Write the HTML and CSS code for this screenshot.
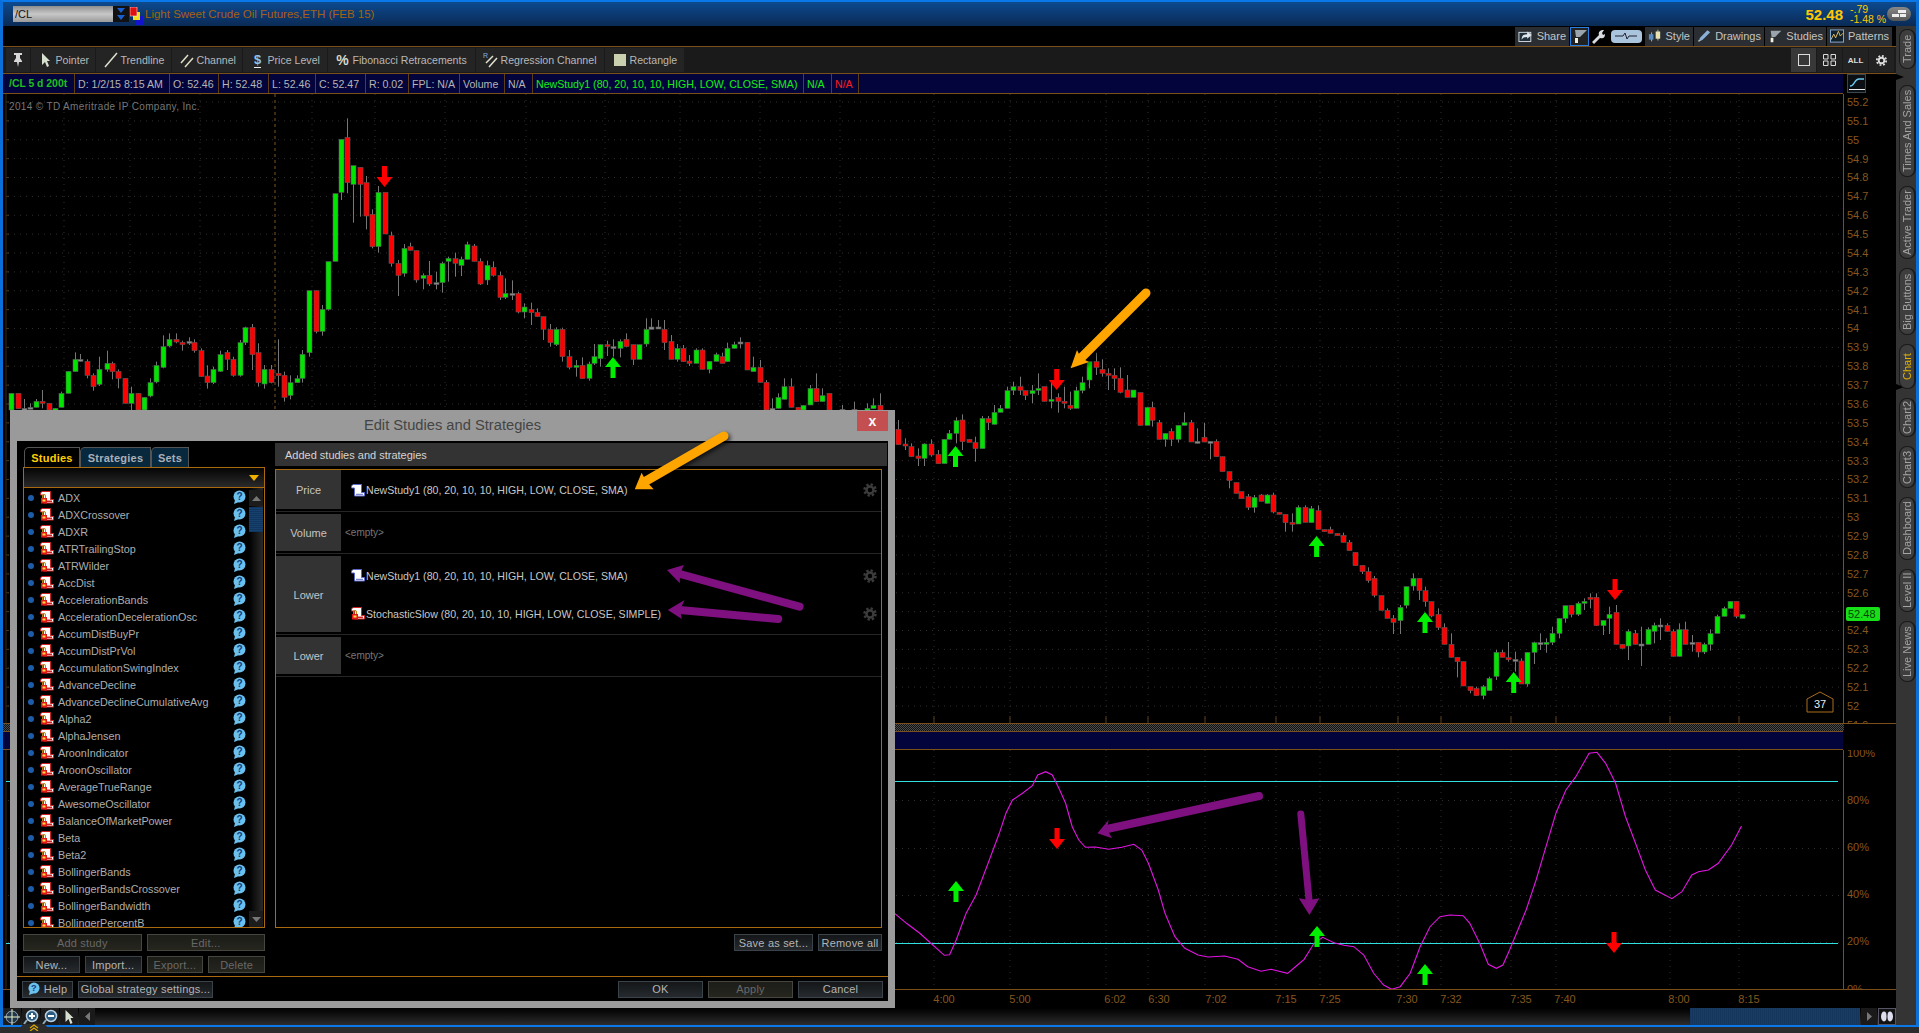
FILE: index.html
```html
<!DOCTYPE html>
<html lang="en">
    <head>
        <meta charset="UTF-8" />
        <title>Edit Studies and Strategies</title>
        <meta name="viewport" content="width=device-width, initial-scale=1.0" />
        <link rel="stylesheet" href="styles.css">
    </head>
    <body>
        <svg class="symbols" aria-hidden="true">
            <symbol id="scroll-blue" viewBox="0 0 15 13">
                <path d="M3 .5h8.500v8h3v3.500h-10v-8h-3v-2z" fill="#fff" stroke="#5a68c8" />
                <path d="M6 10.300h7" stroke="#5a68c8" />
            </symbol>
            <symbol id="scroll-red" viewBox="0 0 15 13">
                <path d="M3 .5h8.500v8h3v3.500h-10v-8h-3v-2z" fill="#fff" stroke="#cc2222" />
                <path d="M8 10.300h5" stroke="#cc2222" stroke-width="1.500" />
                <path d="M3.500 7v-2a1.500 1.500 0 0 1 3 0v2" fill="none" stroke="#b8860b" />
                <rect x="2" y="7" width="6" height="5.500" fill="#e01818" />
                <rect x="3.500" y="8.500" width="3" height="2" fill="#ffe040" />
            </symbol>
            <symbol id="help-bubble" viewBox="0 0 13 15">
                <circle cx="6.500" cy="6.500" r="6" fill="#6cc0ee" />
                <path d="M2 10l-1 4 5-2z" fill="#6cc0ee" />
                <text x="6.500" y="10" text-anchor="middle" font-size="10" font-weight="700" font-family="Liberation Sans, sans-serif" fill="#0d3f80">?</text>
            </symbol>
            <symbol id="gear" viewBox="0 0 14 14">
                <circle cx="7" cy="7" r="5.500" fill="none" stroke="#3c3c3c" stroke-width="2.500" stroke-dasharray="2.300 2" />
                <circle cx="7" cy="7" r="3.500" fill="none" stroke="#3c3c3c" stroke-width="2.500" />
            </symbol>
            <symbol id="fan" viewBox="0 0 16 16">
                <path d="M3 2h12l-7 7H4z" fill="#9aa4ac" />
                <path d="M3 10h3v5H3z" fill="#f0f0e0" />
            </symbol>
            <symbol id="arrow-pointer" viewBox="0 0 10 16">
                <path d="M1 1l8 8H6l2 5-2 1-2-5-3 3z" fill="#d8e0d0" />
            </symbol>
        </svg>

        <header class="topbar">
            <div class="symbol-box">
                <input class="symbol-input" type="text" value="/CL" />
                <span class="symbol-drop">
                    <svg width="8" height="14" viewBox="0 0 8 14"><path d="M0 1h8L4 6zM0 8h8l-4 5z" fill="#1a5fd0" /></svg>
                </span>
            </div>
            <svg class="link-icon" width="13" height="18" viewBox="0 0 13 18">
                <rect x="5" y="9" width="8" height="9" fill="#1414d0" />
                <rect x="3" y="5" width="7" height="8" fill="#f0e020" />
                <rect x="0" y="0" width="7" height="9" fill="#e01010" stroke="#fff" stroke-width=".5" />
            </svg>
            <span class="symbol-name">Light Sweet Crude Oil Futures,ETH (FEB 15)</span>
            <span class="last-price">52.48</span>
            <span class="change">
                <span>-.79</span>
                <span>-1.48 %</span>
            </span>
            <span class="layout-pill">
                <svg width="16" height="8" viewBox="0 0 16 8"><path d="M7 0h8v3H7zM1 4h7v3H1zM9 4h6v3H9z" fill="#eee" /></svg>
            </span>
        </header>

        <div class="main">
            <div class="workspace">
                <div class="subbar">
                    <button class="sub-btn">
                        <svg width="16" height="14" viewBox="0 0 16 14"><rect x="1" y="3" width="13" height="10" fill="#22303c" stroke="#d8e0e8" /><path d="M4 11c0-5 3-6 6-6V2l5 4-5 4V8c-3 0-5 1-6 3z" fill="#dfe6ee" /></svg>
                        Share
                    </button>
                    <button class="sub-icon sub-icon-active"><svg width="16" height="16"><use href="#fan" /></svg></button>
                    <button class="sub-icon sub-icon-dark">
                        <svg width="15" height="15" viewBox="0 0 15 15"><path d="M1 13l7-7c-1-3 1-5 5-5l-2 3 1 2 2-1c0 4-2 5-5 4l-6 6z" fill="#d8dce0" /></svg>
                    </button>
                    <button class="sub-icon sub-icon-pulse">
                        <span class="pulse-pill">
                            <svg width="22" height="8" viewBox="0 0 22 8"><path d="M0 4h8l2-3 2 6 2-3h8" fill="none" stroke="#223" /></svg>
                        </span>
                    </button>
                    <button class="sub-btn">
                        <svg width="15" height="14" viewBox="0 0 15 14"><path d="M4 3v10M11 0v12" stroke="#bbb" /><rect x="1" y="5" width="5" height="6" fill="#5a8ac0" /><rect x="8.500" y="2" width="5" height="8" fill="#e8e0b0" /></svg>
                        Style
                    </button>
                    <button class="sub-btn">
                        <svg width="15" height="14" viewBox="0 0 15 14"><path d="M3 9l8-8 3 2-8 8-4 2z" fill="#8ab0d8" /><path d="M2 11l-1 2 2-1z" fill="#eec" /></svg>
                        Drawings
                    </button>
                    <button class="sub-btn">
                        <svg width="16" height="16"><use href="#fan" /></svg>
                        Studies
                    </button>
                    <button class="sub-btn">
                        <svg width="15" height="14" viewBox="0 0 15 14"><rect x=".5" y=".5" width="14" height="13" fill="#12202c" stroke="#8ab0d8" /><path d="M1 11l3-6 2 4 3-7 2 5 3-3" fill="none" stroke="#e8c060" /></svg>
                        Patterns
                    </button>
                </div>

                <div class="toolbar">
                    <div class="tool-group">
                        <button class="tool-btn tool-pin">
                            <svg width="8" height="14" viewBox="0 0 8 14"><path d="M0 0h8v2H6v3l2 3v1H5l-1 5-1-5H0V8l2-3V2H0z" fill="#d8d8d8" /></svg>
                        </button>
                        <button class="tool-btn"><span class="tool-ico"><svg width="10" height="16"><use href="#arrow-pointer" /></svg></span>Pointer</button>
                        <button class="tool-btn"><span class="tool-ico"><svg width="14" height="16" viewBox="0 0 14 16"><path d="M1 15L13 1" stroke="#e0e0d0" stroke-width="1.500" /></svg></span>Trendline</button>
                        <button class="tool-btn"><span class="tool-ico"><svg width="14" height="16" viewBox="0 0 14 16"><path d="M1 11L8 3M5 15l8-9" stroke="#e0e0c8" stroke-width="1.500" /></svg></span>Channel</button>
                        <button class="tool-btn"><span class="tool-ico"><span class="tool-dollar">$</span></span>Price Level</button>
                        <button class="tool-btn"><span class="tool-ico"><span class="tool-percent">%</span></span>Fibonacci Retracements</button>
                        <button class="tool-btn"><span class="tool-ico"><svg width="15" height="16" viewBox="0 0 15 16"><path d="M3 11l7-7M6 15l8-9" stroke="#e0e0d0" stroke-width="1.500" /><text x="0" y="6" font-size="7" font-family="Liberation Sans, sans-serif" fill="#7ab0e8">R</text></svg></span>Regression Channel</button>
                        <button class="tool-btn"><span class="tool-ico"><span class="tool-rect"></span></span>Rectangle</button>
                    </div>
                    <div class="tool-right">
                        <button class="view-btn view-btn-on"><svg width="12" height="12" viewBox="0 0 12 12"><rect x=".5" y=".5" width="11" height="11" fill="none" stroke="#ddd" /></svg></button>
                        <button class="view-btn"><svg width="13" height="12" viewBox="0 0 13 12"><path d="M.5.5h4.500v4.500H.5zM8 .5h4.500v4.500H8zM.5 7h4.500v4.500H.5zM8 7h4.500v4.500H8z" fill="none" stroke="#ddd" /></svg></button>
                        <button class="view-btn view-all">ALL</button>
                        <button class="view-btn"><svg width="13" height="13" viewBox="0 0 14 14"><circle cx="7" cy="7" r="5" fill="none" stroke="#ddd" stroke-width="2" stroke-dasharray="2 1.900" /><circle cx="7" cy="7" r="3" fill="none" stroke="#ddd" stroke-width="2" /></svg></button>
                    </div>
                </div>

                <div class="info-row">
                    <div class="infobar">
                        <span class="info-cell info-symbol">/CL 5 d 200t</span>
                        <span class="info-cell">D: 1/2/15 8:15 AM</span>
                        <span class="info-cell">O: 52.46</span>
                        <span class="info-cell">H: 52.48</span>
                        <span class="info-cell">L: 52.46</span>
                        <span class="info-cell">C: 52.47</span>
                        <span class="info-cell">R: 0.02</span>
                        <span class="info-cell">FPL: N/A</span>
                        <span class="info-cell">Volume</span>
                        <span class="info-cell">N/A</span>
                        <span class="info-cell info-study">NewStudy1 (80, 20, 10, 10, HIGH, LOW, CLOSE, SMA)</span>
                        <span class="info-cell info-study">N/A</span>
                        <span class="info-cell info-red">N/A</span>
                    </div>
                    <span class="curve-btn">
                        <svg width="16" height="14" viewBox="0 0 16 14"><path d="M1 9c5 0 4-7 9-7h5" fill="none" stroke="#6cc8f0" stroke-width="1.500" /><path d="M0 12.500h16" stroke="#eee" /></svg>
                    </span>
                </div>

                <div class="price-panel">
                    <div class="chart-wrap">
                        <svg class="price-chart" id="price-chart" viewBox="3 94 1840 629"></svg>
                        <span class="copyright">2014 © TD Ameritrade IP Company, Inc.</span>
                    </div>
                    <div class="price-axis">
                        <span>55.2</span><span>55.1</span><span>55</span><span>54.9</span><span>54.8</span><span>54.7</span>
                        <span>54.6</span><span>54.5</span><span>54.4</span><span>54.3</span><span>54.2</span><span>54.1</span>
                        <span>54</span><span>53.9</span><span>53.8</span><span>53.7</span><span>53.6</span><span>53.5</span>
                        <span>53.4</span><span>53.3</span><span>53.2</span><span>53.1</span><span>53</span><span>52.9</span>
                        <span>52.8</span><span>52.7</span><span>52.6</span>
                        <span class="tag-row"><b class="price-tag">52.48</b></span>
                        <span>52.4</span><span>52.3</span><span>52.2</span><span>52.1</span><span>52</span><span>51.9</span>
                    </div>
                </div>

                <div class="hatch"></div>
                <div class="study-bar"></div>

                <div class="lower-panel">
                    <svg class="lower-chart" id="lower-chart" viewBox="3 750 1840 239"></svg>
                    <div class="percent-axis">
                        <span>100%</span><span>80%</span><span>60%</span><span>40%</span><span>20%</span><span>0%</span>
                    </div>
                </div>

                <div class="time-axis">
                    <span style="left: 941px">4:00</span>
                    <span style="left: 1017px">5:00</span>
                    <span style="left: 1112px">6:02</span>
                    <span style="left: 1156px">6:30</span>
                    <span style="left: 1213px">7:02</span>
                    <span style="left: 1283px">7:15</span>
                    <span style="left: 1327px">7:25</span>
                    <span style="left: 1404px">7:30</span>
                    <span style="left: 1448px">7:32</span>
                    <span style="left: 1518px">7:35</span>
                    <span style="left: 1562px">7:40</span>
                    <span style="left: 1676px">8:00</span>
                    <span style="left: 1746px">8:15</span>
                </div>

                <div class="scroll-row">
                    <span class="scroll-tool"><svg width="16" height="16" viewBox="0 0 16 16"><circle cx="8" cy="8" r="6" fill="#22384a" stroke="#8fa8b8" /><path d="M8 0v16M0 8h16" stroke="#e8f0c8" /></svg></span>
                    <span class="scroll-tool"><svg width="16" height="16" viewBox="0 0 16 16"><path d="M4 11l-3 4" stroke="#8fa8b8" stroke-width="2" /><circle cx="9" cy="7" r="5.500" fill="#2a5a80" stroke="#b8d0e0" stroke-width="1.500" /><path d="M9 4v6M6 7h6" stroke="#fff" stroke-width="2" /></svg></span>
                    <span class="scroll-tool"><svg width="16" height="16" viewBox="0 0 16 16"><path d="M4 11l-3 4" stroke="#8fa8b8" stroke-width="2" /><circle cx="9" cy="7" r="5.500" fill="#2a5a80" stroke="#b8d0e0" stroke-width="1.500" /><path d="M6 7h6" stroke="#fff" stroke-width="2" /></svg></span>
                    <span class="scroll-tool"><svg width="11" height="16"><use href="#arrow-pointer" /></svg></span>
                    <span class="scroll-arrow"><svg width="5" height="9" viewBox="0 0 5 9"><path d="M5 0v9L0 4.500z" fill="#777" /></svg></span>
                    <span class="scroll-track"></span>
                    <span class="scroll-thumb"></span>
                    <span class="scroll-arrow"><svg width="5" height="9" viewBox="0 0 5 9"><path d="M0 0v9l5-4.500z" fill="#777" /></svg></span>
                    <span class="scroll-end"><svg width="14" height="11" viewBox="0 0 14 11"><ellipse cx="4" cy="5.500" rx="3" ry="5" fill="#dde" /><ellipse cx="10" cy="5.500" rx="3" ry="5" fill="#dde" /><path d="M7 0v11" stroke="#222" /></svg></span>
                </div>
            </div>

            <nav class="sidetabs">
                <span class="notch notch-trade"></span>
                <span class="notch notch-chart"></span>
                <a class="side-tab tab-trade">Trade</a>
                <a class="side-tab tab-times">Times And Sales</a>
                <a class="side-tab tab-active">Active Trader</a>
                <a class="side-tab tab-big">Big Buttons</a>
                <a class="side-tab tab-chart">Chart</a>
                <a class="side-tab tab-chart2">Chart2</a>
                <a class="side-tab tab-chart3">Chart3</a>
                <a class="side-tab tab-dash">Dashboard</a>
                <a class="side-tab tab-level">Level II</a>
                <a class="side-tab tab-news">Live News</a>
            </nav>
        </div>

        <footer class="footer">
            <span class="footer-tab">
                <svg width="10" height="7" viewBox="0 0 10 7"><path d="M1 4l4-3 4 3M1 7l4-3 4 3" fill="none" stroke="#d8a800" stroke-width="1.300" /></svg>
            </span>
        </footer>

        <section class="dialog">
            <h1 class="dialog-title">Edit Studies and Strategies</h1>
            <button class="dialog-close">x</button>
            <div class="dialog-inner">
                <div class="dialog-body">
                    <div class="left-pane">
                        <div class="tabs">
                            <span class="tab tab-on">Studies</span>
                            <span class="tab tab-strategies">Strategies</span>
                            <span class="tab tab-sets">Sets</span>
                        </div>
                        <div class="filter-box">
                            <svg width="10" height="6" viewBox="0 0 10 6"><path d="M0 0h10L5 6z" fill="#f0b000" /></svg>
                        </div>
                        <div class="list-box">
                            <ul class="study-list">
                                <li class="study"><i class="dot"></i><svg class="study-icon"><use href="#scroll-red" /></svg><span class="study-name">ADX</span><svg class="help"><use href="#help-bubble" /></svg></li>
                                <li class="study"><i class="dot"></i><svg class="study-icon"><use href="#scroll-red" /></svg><span class="study-name">ADXCrossover</span><svg class="help"><use href="#help-bubble" /></svg></li>
                                <li class="study"><i class="dot"></i><svg class="study-icon"><use href="#scroll-red" /></svg><span class="study-name">ADXR</span><svg class="help"><use href="#help-bubble" /></svg></li>
                                <li class="study"><i class="dot"></i><svg class="study-icon"><use href="#scroll-red" /></svg><span class="study-name">ATRTrailingStop</span><svg class="help"><use href="#help-bubble" /></svg></li>
                                <li class="study"><i class="dot"></i><svg class="study-icon"><use href="#scroll-red" /></svg><span class="study-name">ATRWilder</span><svg class="help"><use href="#help-bubble" /></svg></li>
                                <li class="study"><i class="dot"></i><svg class="study-icon"><use href="#scroll-red" /></svg><span class="study-name">AccDist</span><svg class="help"><use href="#help-bubble" /></svg></li>
                                <li class="study"><i class="dot"></i><svg class="study-icon"><use href="#scroll-red" /></svg><span class="study-name">AccelerationBands</span><svg class="help"><use href="#help-bubble" /></svg></li>
                                <li class="study"><i class="dot"></i><svg class="study-icon"><use href="#scroll-red" /></svg><span class="study-name">AccelerationDecelerationOsc</span><svg class="help"><use href="#help-bubble" /></svg></li>
                                <li class="study"><i class="dot"></i><svg class="study-icon"><use href="#scroll-red" /></svg><span class="study-name">AccumDistBuyPr</span><svg class="help"><use href="#help-bubble" /></svg></li>
                                <li class="study"><i class="dot"></i><svg class="study-icon"><use href="#scroll-red" /></svg><span class="study-name">AccumDistPrVol</span><svg class="help"><use href="#help-bubble" /></svg></li>
                                <li class="study"><i class="dot"></i><svg class="study-icon"><use href="#scroll-red" /></svg><span class="study-name">AccumulationSwingIndex</span><svg class="help"><use href="#help-bubble" /></svg></li>
                                <li class="study"><i class="dot"></i><svg class="study-icon"><use href="#scroll-red" /></svg><span class="study-name">AdvanceDecline</span><svg class="help"><use href="#help-bubble" /></svg></li>
                                <li class="study"><i class="dot"></i><svg class="study-icon"><use href="#scroll-red" /></svg><span class="study-name">AdvanceDeclineCumulativeAvg</span><svg class="help"><use href="#help-bubble" /></svg></li>
                                <li class="study"><i class="dot"></i><svg class="study-icon"><use href="#scroll-red" /></svg><span class="study-name">Alpha2</span><svg class="help"><use href="#help-bubble" /></svg></li>
                                <li class="study"><i class="dot"></i><svg class="study-icon"><use href="#scroll-red" /></svg><span class="study-name">AlphaJensen</span><svg class="help"><use href="#help-bubble" /></svg></li>
                                <li class="study"><i class="dot"></i><svg class="study-icon"><use href="#scroll-red" /></svg><span class="study-name">AroonIndicator</span><svg class="help"><use href="#help-bubble" /></svg></li>
                                <li class="study"><i class="dot"></i><svg class="study-icon"><use href="#scroll-red" /></svg><span class="study-name">AroonOscillator</span><svg class="help"><use href="#help-bubble" /></svg></li>
                                <li class="study"><i class="dot"></i><svg class="study-icon"><use href="#scroll-red" /></svg><span class="study-name">AverageTrueRange</span><svg class="help"><use href="#help-bubble" /></svg></li>
                                <li class="study"><i class="dot"></i><svg class="study-icon"><use href="#scroll-red" /></svg><span class="study-name">AwesomeOscillator</span><svg class="help"><use href="#help-bubble" /></svg></li>
                                <li class="study"><i class="dot"></i><svg class="study-icon"><use href="#scroll-red" /></svg><span class="study-name">BalanceOfMarketPower</span><svg class="help"><use href="#help-bubble" /></svg></li>
                                <li class="study"><i class="dot"></i><svg class="study-icon"><use href="#scroll-red" /></svg><span class="study-name">Beta</span><svg class="help"><use href="#help-bubble" /></svg></li>
                                <li class="study"><i class="dot"></i><svg class="study-icon"><use href="#scroll-red" /></svg><span class="study-name">Beta2</span><svg class="help"><use href="#help-bubble" /></svg></li>
                                <li class="study"><i class="dot"></i><svg class="study-icon"><use href="#scroll-red" /></svg><span class="study-name">BollingerBands</span><svg class="help"><use href="#help-bubble" /></svg></li>
                                <li class="study"><i class="dot"></i><svg class="study-icon"><use href="#scroll-red" /></svg><span class="study-name">BollingerBandsCrossover</span><svg class="help"><use href="#help-bubble" /></svg></li>
                                <li class="study"><i class="dot"></i><svg class="study-icon"><use href="#scroll-red" /></svg><span class="study-name">BollingerBandwidth</span><svg class="help"><use href="#help-bubble" /></svg></li>
                                <li class="study"><i class="dot"></i><svg class="study-icon"><use href="#scroll-red" /></svg><span class="study-name">BollingerPercentB</span><svg class="help"><use href="#help-bubble" /></svg></li>
                            </ul>
                            <div class="list-scroll">
                                <span class="list-arrow"><svg width="9" height="5" viewBox="0 0 9 5"><path d="M0 5h9L4.500 0z" fill="#777" /></svg></span>
                                <span class="list-thumb"></span>
                                <span class="list-fill"></span>
                                <span class="list-arrow"><svg width="9" height="5" viewBox="0 0 9 5"><path d="M0 0h9L4.500 5z" fill="#777" /></svg></span>
                            </div>
                        </div>
                        <div class="btn-row">
                            <button class="btn btn-off">Add study</button>
                            <button class="btn btn-off">Edit...</button>
                        </div>
                        <div class="btn-row">
                            <button class="btn">New...</button>
                            <button class="btn">Import...</button>
                            <button class="btn btn-off">Export...</button>
                            <button class="btn btn-off">Delete</button>
                        </div>
                    </div>

                    <div class="right-pane">
                        <div class="added-head">Added studies and strategies</div>
                        <div class="slots">
                            <div class="slot">
                                <div class="slot-label slot-tall">Price</div>
                                <div class="slot-items">
                                    <div class="item"><svg class="item-icon"><use href="#scroll-blue" /></svg><span class="item-name">NewStudy1 (80, 20, 10, 10, HIGH, LOW, CLOSE, SMA)</span><svg class="item-gear"><use href="#gear" /></svg></div>
                                </div>
                            </div>
                            <div class="slot">
                                <div class="slot-label">Volume</div>
                                <div class="slot-items"><span class="empty">&lt;empty&gt;</span></div>
                            </div>
                            <div class="slot">
                                <div class="slot-label slot-double">Lower</div>
                                <div class="slot-items">
                                    <div class="item"><svg class="item-icon"><use href="#scroll-blue" /></svg><span class="item-name">NewStudy1 (80, 20, 10, 10, HIGH, LOW, CLOSE, SMA)</span><svg class="item-gear"><use href="#gear" /></svg></div>
                                    <div class="item"><svg class="item-icon"><use href="#scroll-red" /></svg><span class="item-name">StochasticSlow (80, 20, 10, 10, HIGH, LOW, CLOSE, SIMPLE)</span><svg class="item-gear"><use href="#gear" /></svg></div>
                                </div>
                            </div>
                            <div class="slot">
                                <div class="slot-label">Lower</div>
                                <div class="slot-items"><span class="empty">&lt;empty&gt;</span></div>
                            </div>
                        </div>
                        <div class="set-row">
                            <button class="btn btn-save">Save as set...</button>
                            <button class="btn btn-remove">Remove all</button>
                        </div>
                    </div>
                </div>
                <div class="dialog-foot">
                    <button class="btn btn-help"><svg width="12" height="14"><use href="#help-bubble" /></svg>Help</button>
                    <button class="btn btn-global">Global strategy settings...</button>
                    <span class="foot-gap"></span>
                    <button class="btn btn-foot">OK</button>
                    <button class="btn btn-foot btn-off">Apply</button>
                    <button class="btn btn-foot">Cancel</button>
                </div>
            </div>
        </section>

        <svg class="annotations" id="annotations" viewBox="0 0 1919 1033"></svg>

        <script src="app.js"></script>
    </body>
</html>
```
FILE: styles.css
```css
* {
    margin: 0;
    padding: 0;
    box-sizing: border-box;
}

body {
    position: relative;
    width: 1919px;
    height: 1033px;
    overflow: hidden;
    display: flex;
    flex-direction: column;
    background: #000;
    color: #bbb;
    font-family: "Liberation Sans", Arial, sans-serif;
    font-size: 11px;
}

button {
    font-family: inherit;
    font-size: 11px;
    color: inherit;
    border: none;
    background: none;
}

.symbols {
    position: absolute;
    width: 0;
    height: 0;
}

/* top bar */

.topbar {
    flex: none;
    height: 26px;
    display: flex;
    align-items: center;
    border-top: 2px solid #0a78e8;
    border-left: 3px solid #0a6fd8;
    border-right: 3px solid #0a6fd8;
    padding-left: 10px;
    background: linear-gradient(#0c4a8f, #0a2a55);
}

.symbol-box {
    display: flex;
    height: 16px;
    width: 116px;
    background: #111;
}

.symbol-input {
    width: 100px;
    height: 16px;
    border: none;
    padding-left: 2px;
    font-family: inherit;
    font-size: 11px;
    color: #111;
    background: linear-gradient(#8d8d8d, #c8c8c8 50%, #9a9a9a);
}

.symbol-drop {
    flex: 1;
    display: flex;
    align-items: center;
    justify-content: center;
}

.link-icon {
    margin: 3px 2px 0 1px;
}

.symbol-name {
    color: #a8610f;
    font-size: 11.5px;
}

.last-price {
    margin-left: auto;
    color: #ffc800;
    font-size: 15px;
    font-weight: 700;
}

.change {
    display: flex;
    flex-direction: column;
    margin-left: 7px;
    color: #ffc800;
    font-size: 10.5px;
    line-height: 10px;
    width: 37px;
}

.layout-pill {
    display: flex;
    align-items: center;
    justify-content: center;
    width: 24px;
    height: 14px;
    margin-right: 5px;
    border-radius: 7px;
    background: linear-gradient(#888, #555);
}

/* main frame */

.main {
    flex: none;
    height: 999px;
    display: flex;
    border-left: 3px solid #0a6fd8;
    border-right: 3px solid #0a6fd8;
}

.workspace {
    width: 1893px;
    display: flex;
    flex-direction: column;
}

.subbar {
    height: 20px;
    display: grid;
    grid-template-columns: 54px 19px 17px 36px 48px 70px 61px 65px;
    justify-content: end;
    align-items: center;
    gap: 1px;
    padding-right: 4px;
}

.sub-btn {
    display: flex;
    align-items: center;
    gap: 4px;
    height: 19px;
    padding: 0 3px 0 3px;
    background: #2a2e32;
    color: #c4c4c4;
    font-size: 11px;
    white-space: nowrap;
}

.sub-icon {
    display: flex;
    align-items: center;
    justify-content: center;
    height: 19px;
    background: #000;
}

.sub-icon-active {
    border: 1px solid #2a80e0;
    background: #222;
}

.pulse-pill {
    display: flex;
    align-items: center;
    justify-content: center;
    width: 31px;
    height: 13px;
    border-radius: 4px;
    background: #a9c4dc;
}

.toolbar {
    height: 28px;
    display: flex;
    align-items: center;
    padding: 0 2px 0 3px;
    background: #1a1a1a;
    border-top: 1px solid #7a4f1a;
    border-bottom: 1px solid #7a4f1a;
}

.tool-group {
    display: grid;
    grid-template-columns: 24px 64px 75px 70px 84px 147px 128px 79px;
    gap: 1px;
}

.tool-btn {
    display: flex;
    align-items: center;
    height: 24px;
    padding-left: 7px;
    background: #242424;
    color: #b8b8b8;
    font-size: 10.6px;
    white-space: nowrap;
}

.tool-ico {
    flex: none;
    display: flex;
    align-items: center;
    justify-content: center;
    width: 15px;
    margin-right: 2.5px;
}

.tool-pin {
    justify-content: center;
    padding: 0;
}

.tool-dollar {
    color: #8ac4f0;
    font-size: 13px;
    font-weight: 700;
    border-bottom: 1px solid #eee;
    line-height: 14px;
}

.tool-percent {
    color: #d8d8c8;
    font-size: 14px;
    font-weight: 700;
}

.tool-rect {
    width: 12px;
    height: 12px;
    background: #c8d0b0;
}

.tool-right {
    display: flex;
    gap: 1px;
    margin-left: auto;
}

.view-btn {
    display: flex;
    align-items: center;
    justify-content: center;
    width: 25px;
    height: 24px;
    background: #222;
    color: #ddd;
}

.view-btn-on {
    background: #383838;
}

.view-all {
    font-size: 8px;
    font-weight: 700;
}

/* info bar */

.info-row {
    height: 20px;
    display: flex;
}

.infobar {
    width: 1840px;
    height: 20px;
    display: grid;
    grid-template-columns: 72px 95px 49px 50px 47px 50px 43px 51px 45px 28px 271px 28px 27px;
    justify-content: start;
    background: #04043c;
    border-bottom: 1px solid #7a4f1a;
}

.info-cell {
    display: flex;
    align-items: center;
    padding-left: 3px;
    border-right: 1px solid #5c3d18;
    color: #b4b4b4;
    font-size: 10.6px;
    white-space: nowrap;
}

.info-symbol {
    color: #1fbf1f;
    padding-left: 6px;
    font-weight: 700;
    font-size: 10.4px;
}

.info-study {
    color: #14f014;
}

.info-red {
    color: #ff1c1c;
}

.curve-btn {
    display: flex;
    align-items: center;
    justify-content: center;
    width: 19px;
    height: 19px;
    margin-left: 4px;
    background: #0c1014;
    border: 1px solid #3a4650;
}

/* charts */

.price-panel {
    flex: none;
    height: 630px;
    display: flex;
    border-bottom: 1px solid #7a4f1a;
    overflow: hidden;
}

.chart-wrap {
    position: relative;
    width: 1840px;
}

.price-chart {
    display: block;
    width: 1840px;
    height: 629px;
}

.copyright {
    position: absolute;
    left: 6px;
    top: 7px;
    color: #777;
    font-size: 10px;
    letter-spacing: 0.35px;
}

.price-axis {
    flex: 1;
    margin-top: -1.5px;
    border-left: 1px solid #7a4f1a;
    color: #85571f;
}

.price-axis span {
    display: flex;
    align-items: center;
    height: 18.875px;
    padding-left: 3px;
}

.price-axis .tag-row {
    align-items: flex-start;
    padding-left: 2px;
}

.price-tag {
    display: block;
    width: 34px;
    height: 14px;
    margin-top: 5px;
    border-radius: 2px;
    padding-left: 2px;
    background: #18e018;
    color: #044404;
    font-weight: 400;
    line-height: 14px;
}

.hatch {
    flex: none;
    width: 1841px;
    height: 7px;
    background: repeating-conic-gradient(#4a4a4a 0 25%, #111 0 50%) 0 0 / 2px 2px;
}

.study-bar {
    flex: none;
    width: 1840px;
    height: 19px;
    background: #04043c;
    border-top: 1px solid #7a4f1a;
    border-bottom: 1px solid #7a4f1a;
}

.lower-panel {
    flex: none;
    height: 240px;
    display: flex;
    border-bottom: 1px solid #7a4f1a;
    overflow: hidden;
}

.lower-chart {
    display: block;
    width: 1840px;
    height: 239px;
}

.percent-axis {
    flex: 1;
    margin-top: -21px;
    border-left: 1px solid #7a4f1a;
    color: #85571f;
}

.percent-axis span {
    display: flex;
    align-items: center;
    height: 47.2px;
    padding-left: 3px;
}

.time-axis {
    position: relative;
    flex: none;
    height: 18px;
    color: #85571f;
}

.time-axis span {
    position: absolute;
    top: 3px;
    transform: translateX(-50%);
}

.scroll-row {
    flex: none;
    height: 17px;
    display: flex;
    background: linear-gradient(#000, #2c2c2c);
}

.scroll-tool {
    display: flex;
    align-items: center;
    justify-content: center;
    width: 18px;
    margin-right: 1px;
    background: #1c1c1c;
}

.scroll-arrow {
    display: flex;
    align-items: center;
    justify-content: center;
    width: 16px;
    background: #1a1a1a;
}

.scroll-track {
    flex: 1;
}

.scroll-thumb {
    width: 170px;
    margin-right: 1px;
    background: repeating-linear-gradient(90deg, #14365c 0 1px, #1a3c64 1px 2px);
}

.scroll-end {
    display: flex;
    align-items: center;
    justify-content: center;
    width: 18px;
    margin-left: 1px;
    border: 1px solid #556;
    background: #111;
}

/* right tabs */

.sidetabs {
    position: relative;
    flex: 1;
    display: flex;
    flex-direction: column;
    align-items: flex-end;
    gap: 9px;
    padding-top: 3px;
    background: #343434;
}

.notch {
    position: absolute;
    left: 0;
    width: 0;
    height: 0;
    border-left: 8px solid #000;
    border-top: 3px solid transparent;
    border-bottom: 3px solid transparent;
}

.notch-trade {
    top: 48px;
}

.notch-chart {
    top: 358px;
}

.side-tab {
    display: flex;
    align-items: center;
    justify-content: center;
    width: 17px;
    writing-mode: vertical-rl;
    transform: rotate(180deg);
    border: 1px solid #1a1a1a;
    border-left-width: 2px;
    border-radius: 8px;
    background: #3e3e3e;
    color: #a4a4a4;
    font-size: 11px;
    white-space: nowrap;
}

.tab-trade {
    height: 40px;
    margin-bottom: 7px;
}

.tab-times {
    height: 92px;
}

.tab-active {
    height: 73px;
}

.tab-big {
    height: 67px;
}

.tab-chart {
    height: 45px;
    color: #e0b000;
}

.tab-chart2 {
    height: 39px;
}

.tab-chart3 {
    height: 42px;
}

.tab-dash {
    height: 63px;
}

.tab-level {
    height: 43px;
}

.tab-news {
    height: 61px;
}

.footer {
    flex: none;
    height: 8px;
    padding-left: 20px;
    border-top: 2px solid #0a78e8;
    background: #2c2c2c;
}

.footer-tab {
    display: flex;
    justify-content: center;
    width: 28px;
    height: 9px;
    margin-top: -3px;
    border-radius: 6px 6px 0 0;
    background: #2c2c2c;
}

/* dialog */

.dialog {
    position: absolute;
    left: 10px;
    top: 410px;
    width: 885px;
    height: 598px;
    padding: 31px 7px 7px;
    background: #9a9a9a;
}

.dialog-title {
    position: absolute;
    left: 0;
    right: 0;
    top: 7px;
    color: #444;
    font-size: 14.7px;
    font-weight: 400;
    text-align: center;
}

.dialog-close {
    position: absolute;
    top: 1px;
    right: 7px;
    width: 31px;
    height: 20px;
    background: #c44f50;
    color: #fff;
    font-size: 14px;
    font-weight: 700;
}

.dialog-inner {
    height: 560px;
    display: flex;
    flex-direction: column;
    background: #000;
}

.dialog-body {
    flex: none;
    height: 535px;
    display: flex;
    gap: 10px;
    padding: 2px 1px 0 6px;
}

.left-pane {
    flex: none;
    width: 242px;
    margin-top: 4px;
}

.tabs {
    height: 20px;
    display: flex;
    padding-left: 1px;
}

.tab {
    display: flex;
    align-items: center;
    justify-content: center;
    width: 56px;
    border: 1px solid #555;
    border-bottom: none;
    border-radius: 5px 0 0 0;
    background: #08283e;
    color: #a8b0b8;
    font-weight: 700;
    letter-spacing: 0.25px;
}

.tab-on {
    background: #000;
    color: #ffd000;
}

.tab-strategies {
    width: 71px;
}

.tab-sets {
    width: 38px;
}

.filter-box {
    height: 21px;
    display: flex;
    align-items: center;
    justify-content: flex-end;
    padding-right: 5px;
    border: 1px solid #a8690f;
    background: linear-gradient(#050505, #2a2a2a);
}

.list-box {
    height: 440px;
    display: flex;
    border: 1px solid #a8690f;
    border-top: none;
    overflow: hidden;
}

.study-list {
    flex: none;
    width: 222px;
    height: 439px;
    list-style: none;
    padding-top: 1px;
    overflow: hidden;
}

.study {
    height: 17px;
    display: flex;
    align-items: center;
    padding-left: 4px;
    white-space: nowrap;
}

.dot {
    flex: none;
    width: 6px;
    height: 6px;
    margin-right: 5px;
    border-radius: 50%;
    background: #1c5ca8;
}

.study-icon {
    flex: none;
    width: 15px;
    height: 13px;
    margin-right: 4px;
}

.study-name {
    flex: 1;
    font-size: 10.8px;
    color: #aeaeae;
}

.help {
    flex: none;
    width: 13px;
    height: 15px;
}

.list-scroll {
    flex: none;
    width: 14px;
    margin-left: 3px;
    padding-top: 2px;
    display: flex;
    flex-direction: column;
    background: linear-gradient(90deg, #000, #2a2a2a);
}

.list-arrow {
    flex: none;
    display: flex;
    align-items: center;
    justify-content: center;
    height: 16px;
    background: #1c1c1c;
}

.list-thumb {
    flex: none;
    height: 25px;
    margin-top: 1px;
    background: repeating-linear-gradient(#103660 0 1px, #16406e 1px 2px);
}

.list-fill {
    flex: 1;
}

.btn-row {
    display: flex;
    gap: 5px;
    margin-top: 5px;
}

.btn-row:nth-child(4) {
    margin-top: 6px;
}

.btn {
    flex: 1;
    height: 17px;
    border: 1px solid #3a424a;
    background: linear-gradient(#141618, #262a2e);
    color: #b4b4b4;
    font-size: 11px;
    letter-spacing: 0.2px;
    white-space: nowrap;
}

.btn-off {
    border-color: #45463f;
    background: linear-gradient(#1c1c18, #26261f);
    color: #686868;
}

.right-pane {
    flex: none;
    width: 612px;
}

.added-head {
    height: 23px;
    display: flex;
    align-items: center;
    padding-left: 10px;
    background: #333;
    color: #d4d4d4;
    font-size: 11px;
}

.slots {
    width: 607px;
    height: 459px;
    margin-top: 3px;
    border: 1px solid #a8690f;
}

.slot {
    display: flex;
    padding-bottom: 2px;
    margin-bottom: 2px;
    border-bottom: 1px solid #262626;
}

.slot-label {
    flex: none;
    display: flex;
    align-items: center;
    justify-content: center;
    width: 65px;
    height: 37px;
    background: #333;
    color: #c4c4c4;
}

.slot-tall {
    height: 39px;
    padding-top: 1px;
}

.slot-double {
    height: 76px;
    padding-top: 2px;
}

.slot-items {
    flex: 1;
    display: flex;
    flex-direction: column;
    justify-content: center;
}

.item {
    height: 38px;
    display: flex;
    align-items: center;
    padding: 1px 4px 0 9px;
}

.item-icon {
    flex: none;
    width: 15px;
    height: 13px;
    margin-right: 1px;
}

.item-name {
    flex: 1;
    color: #c8c8c8;
    font-size: 10.6px;
    white-space: nowrap;
}

.item-gear {
    flex: none;
    width: 14px;
    height: 14px;
}

.empty {
    padding-left: 4px;
    color: #777;
    font-size: 10px;
}

.set-row {
    display: flex;
    justify-content: flex-end;
    gap: 5px;
    margin-top: 6px;
    padding-right: 5px;
}

.btn-save {
    flex: none;
    width: 79px;
}

.btn-remove {
    flex: none;
    width: 64px;
}

.dialog-foot {
    height: 25px;
    display: flex;
    align-items: center;
    gap: 5px;
    padding: 0 5px;
    border-top: 1px solid #a8690f;
}

.btn-help {
    flex: none;
    display: flex;
    align-items: center;
    justify-content: center;
    gap: 4px;
    width: 51px;
}

.btn-global {
    flex: none;
    width: 135px;
}

.foot-gap {
    flex: 1;
}

.btn-foot {
    flex: none;
    width: 85px;
}

.annotations {
    position: absolute;
    left: 0;
    top: 0;
    width: 1919px;
    height: 1033px;
    pointer-events: none;
    filter: drop-shadow(2px 2px 2px rgba(0, 0, 0, 0.7));
}
```
FILE: app.js
```js
// candle rows read off the reference: [x, colour, bodyTop, bodyBottom, wickTop, wickBottom]
var SECTIONS = [
    {
        ox: 0, oy: 100, sx: 2.45,
        rows: [
            [28, "g", 880, 930], [43, "r", 880, 926], [58, "n", 925, 930, 897], [73, "n", 922, 926, 910],
            [89, "g", 904, 922, 897], [104, "r", 904, 910, 870, 925], [120, "r", 910, 930], [135, "g", 925, 930],
            [150, "g", 880, 922, 875], [167, "g", 814, 880], [183, "g", 778, 815, 757], [197, "n", 778, 781, 762, 785],
            [213, "r", 784, 826, 778, 835], [228, "r", 826, 860, 820, 872], [243, "g", 808, 853, 770, 858],
            [261, "g", 790, 808, 752, 815], [275, "r", 790, 815, 785, 838], [290, "r", 814, 835, 808, 865],
            [307, "r", 835, 910], [322, "g", 880, 910, 860, 930], [337, "r", 880, 930], [353, "g", 892, 930],
            [368, "g", 848, 888, 835, 892], [383, "g", 796, 846, 785, 850], [400, "g", 740, 802, 706, 805],
            [415, "g", 718, 738, 700, 742], [430, "r", 718, 726, 700, 730], [447, "r", 727, 734, 722, 752],
            [462, "n", 724, 727, 712, 735], [476, "r", 727, 752, 718, 758], [493, "r", 752, 830, 745],
            [508, "r", 828, 848, 796, 866], [523, "g", 808, 848, 800, 852], [540, "g", 764, 814, 752, 816],
            [555, "r", 757, 778, 750, 810], [570, "r", 778, 826, 770, 830], [587, "g", 728, 826, 720, 830],
            [601, "g", 683, 728, 680, 735], [618, "r", 682, 764, 672, 810], [633, "r", 758, 848, 730, 860],
            [648, "g", 808, 852, 795, 866], [665, "r", 808, 848, 795, 850], [680, "r", 820, 827, 718, 860],
            [695, "r", 826, 892, 815, 905], [711, "g", 848, 886, 826, 898], [727, "g", 836, 848, 826],
            [741, "g", 763, 835, 750, 848], [758, "g", 572, 758, 572, 770], [773, "r", 572, 695, 572, 700],
            [789, "g", 628, 694, 615, 707], [804, "g", 485, 628, 485, 632], [820, "g", 281, 484],
            [835, "g", 118, 277, 118, 300], [851, "r", 112, 248, 55, 280], [866, "g", 197, 253, 197, 368],
            [881, "r", 202, 253, 202, 350], [897, "r", 248, 348, 228, 388], [912, "r", 343, 440, 328, 445],
            [927, "g", 277, 440, 258, 458], [943, "r", 277, 402], [958, "r", 407, 490, 395, 500],
            [974, "r", 490, 526, 480, 588], [990, "g", 445, 520, 432, 530], [1005, "r", 440, 451, 428],
            [1020, "r", 452, 540, 452, 548], [1037, "g", 526, 535, 520, 568], [1051, "r", 526, 552, 483, 558],
            [1067, "n", 548, 553, 515, 568], [1083, "g", 490, 548, 485, 578], [1098, "g", 475, 484, 470, 545],
            [1114, "r", 476, 490, 458, 530], [1130, "g", 478, 496, 470, 528], [1145, "g", 434, 478, 425],
            [1162, "r", 438, 484, 432], [1177, "r", 484, 552, 475, 555], [1192, "g", 496, 540, 482, 555],
            [1209, "r", 502, 526, 484, 530], [1224, "r", 526, 592, 515, 600], [1238, "g", 580, 592, 535, 597],
            [1255, "n", 580, 583, 541, 600], [1270, "r", 580, 636, 575, 640], [1285, "g", 621, 636, 610, 655],
            [1301, "r", 628, 638, 608, 675], [1316, "r", 637, 650, 625], [1331, "r", 650, 688, 650, 720],
            [1348, "r", 688, 728, 672, 740], [1363, "g", 688, 734, 682, 738], [1378, "r", 688, 770, 683, 785],
            [1394, "r", 770, 802, 750, 808], [1410, "g", 796, 802, 780, 830], [1425, "r", 796, 836, 772],
            [1442, "g", 792, 835, 785, 842], [1456, "g", 770, 790, 732, 795], [1471, "g", 734, 776, 734, 800],
            [1487, "r", 734, 739, 722, 768], [1503, "n", 740, 745, 718, 770], [1518, "g", 724, 745, 718, 772],
            [1534, "r", 718, 740, 700], [1550, "r", 734, 778, 734, 795], [1565, "g", 734, 778]
        ]
    },
    {
        ox: 640, oy: 280, sx: 2.45,
        rows: [
            [14, "g", 148, 192, 115, 200], [28, "n", 141, 148, 115], [43, "n", 141, 147, 120], [60, "r", 148, 188, 120, 210],
            [75, "r", 184, 238, 165], [90, "g", 205, 238, 192, 245], [106, "r", 205, 245, 195], [121, "r", 243, 250, 225, 258],
            [136, "g", 210, 250, 205], [153, "r", 210, 268, 205], [168, "g", 244, 268, 244, 280], [185, "g", 224, 244, 218],
            [200, "r", 230, 250, 218], [214, "g", 205, 245, 188], [231, "g", 194, 205, 185], [246, "n", 186, 190, 172, 205],
            [261, "r", 187, 270], [277, "g", 262, 275, 230], [293, "r", 262, 307, 240], [308, "r", 307, 390, 300],
            [323, "n", 385, 390, 355], [339, "g", 352, 385, 340], [354, "g", 320, 358, 295], [371, "r", 320, 382, 295],
            [386, "r", 382, 390], [400, "g", 376, 390], [417, "g", 325, 375, 315], [432, "r", 325, 365, 280],
            [447, "g", 347, 365, 325], [464, "r", 340, 390], [495, "n", 388, 390, 375], [525, "n", 388, 390, 365],
            [556, "g", 385, 390, 370], [572, "g", 376, 386, 355], [587, "r", 376, 390, 340],
            [632, "r", 448, 494, 420], [650, "r", 492, 498, 475, 510], [665, "r", 500, 530, 490], [680, "r", 528, 535, 505, 558],
            [697, "g", 492, 535, 490, 558], [712, "r", 492, 525, 478, 530], [729, "r", 523, 551, 510, 552], [744, "g", 478, 551],
            [758, "g", 460, 478, 450], [775, "g", 422, 460, 412, 490], [790, "r", 420, 485, 403, 510], [805, "r", 478, 487],
            [821, "r", 488, 506, 470, 545], [837, "g", 415, 506, 408], [852, "r", 416, 428, 408, 450], [868, "g", 397, 433, 375],
            [883, "g", 385, 397, 375], [898, "g", 332, 385, 320], [915, "g", 320, 331, 305, 345], [930, "r", 320, 331, 290, 345],
            [944, "r", 332, 346, 332, 360], [961, "g", 332, 341, 315, 370], [976, "g", 325, 331, 280, 345], [991, "r", 320, 364],
            [1008, "g", 358, 364, 305, 385], [1023, "r", 352, 364, 340, 398], [1038, "r", 364, 370, 320, 385],
            [1054, "r", 376, 385, 335, 390], [1069, "g", 332, 385, 320], [1084, "g", 308, 332, 290, 340], [1101, "g", 245, 300, 245, 325],
            [1116, "r", 245, 262, 218, 285], [1131, "r", 268, 280, 238, 290], [1147, "r", 280, 286, 265, 330], [1162, "r", 286, 295, 265, 330],
            [1177, "r", 295, 337, 262, 340], [1193, "r", 330, 352, 285], [1208, "g", 330, 352], [1224, "r", 338, 436],
            [1241, "g", 382, 436], [1255, "r", 382, 421, 365, 440], [1272, "r", 428, 478, 420], [1287, "g", 460, 478, 460, 500],
            [1302, "r", 454, 478, 445, 498], [1318, "g", 436, 478, 436, 488], [1334, "g", 428, 436, 397], [1349, "r", 428, 486, 420],
            [1365, "n", 484, 488, 445, 490], [1381, "r", 472, 486, 428], [1396, "n", 484, 488, 484, 538], [1412, "r", 484, 530, 478],
            [1427, "r", 530, 575], [1442, "r", 575, 602, 575, 625], [1459, "r", 608, 640]
        ]
    },
    {
        ox: 1240, oy: 480, sx: 2.309,
        rows: [
            [3, "r", 35, 56], [18, "r", 50, 82, 42, 90], [33, "g", 52, 82, 45, 98], [48, "r", 45, 64, 42], [62, "g", 45, 70, 42],
            [77, "r", 45, 96, 38, 100], [91, "r", 97, 103], [105, "r", 103, 128, 103, 155], [120, "r", 127, 133, 100, 155],
            [135, "g", 82, 132, 76], [149, "r", 82, 127, 76], [164, "g", 86, 128, 78], [179, "r", 92, 148, 76], [193, "r", 149, 155],
            [208, "r", 149, 160, 140], [223, "r", 160, 167], [237, "r", 166, 187, 158], [252, "r", 187, 212, 180], [266, "r", 217, 257],
            [281, "r", 256, 275, 256, 282], [296, "r", 275, 302, 262, 308], [310, "r", 295, 346, 288, 352], [325, "r", 347, 391],
            [340, "r", 391, 415, 385], [354, "r", 415, 427, 405, 462], [370, "g", 382, 422, 375, 462], [384, "g", 320, 376, 320, 385],
            [399, "g", 295, 318, 280, 332], [414, "r", 295, 332, 295, 360], [428, "r", 332, 365, 320, 380], [442, "r", 365, 408, 365, 412],
            [458, "r", 403, 443, 385, 450], [472, "r", 442, 493, 430], [487, "r", 493, 532, 460], [502, "r", 532, 545, 532, 592],
            [516, "r", 545, 618], [530, "r", 620, 632, 620, 640], [546, "r", 625, 647, 620], [560, "g", 620, 647, 615, 658],
            [574, "g", 595, 632, 590], [590, "g", 517, 589, 510, 600], [604, "r", 517, 532, 510], [619, "r", 533, 539, 486, 545],
            [634, "n", 538, 541, 515, 575], [648, "r", 543, 612, 535], [662, "g", 517, 612, 517, 620], [678, "g", 488, 517, 485, 552],
            [692, "n", 488, 493, 460, 510], [706, "g", 487, 492, 475, 518], [721, "g", 460, 487, 440, 495], [736, "g", 415, 460, 415, 475],
            [750, "g", 377, 415, 377, 428], [765, "r", 376, 403, 376, 412], [780, "g", 370, 403, 365, 408], [794, "g", 364, 370, 355, 390],
            [809, "r", 352, 358, 340, 385], [823, "r", 352, 437, 340], [838, "g", 421, 437, 421, 465], [853, "g", 403, 415, 380, 462],
            [868, "r", 397, 493, 375], [883, "r", 493, 505], [897, "g", 454, 498, 448, 540], [911, "r", 460, 493, 450],
            [927, "n", 492, 496, 440, 558], [941, "g", 448, 493, 442], [955, "g", 436, 454, 428, 490], [970, "n", 435, 439, 415, 480],
            [985, "r", 436, 454, 430], [999, "r", 454, 529, 448], [1014, "g", 449, 529, 430], [1028, "r", 449, 493, 425],
            [1043, "n", 487, 493, 465, 515], [1058, "r", 487, 516, 487, 532], [1072, "g", 493, 516, 488, 522], [1086, "g", 461, 493, 448, 512],
            [1102, "g", 409, 460, 404], [1117, "g", 385, 409, 380], [1131, "g", 364, 385], [1146, "r", 364, 409, 364, 415], [1160, "g", 403, 415]
        ]
    }
];

var COLORS = { g: "#00e400", r: "#ff0000", n: "#8a8a8a" };

var GRID_X = [64, 130, 200, 312, 375, 445, 526, 605, 680, 760, 840, 934, 1010, 1106, 1148, 1205, 1276, 1320, 1398, 1441, 1511, 1556, 1670, 1739];

var STUDY_LINE = [
    [22, 580], [40, 610], [60, 640], [78, 672], [97, 706], [105, 704], [115, 660], [130, 580], [145, 525], [165, 420],
    [180, 340], [190, 280], [200, 240], [215, 220], [230, 197], [238, 165], [250, 155], [260, 165], [270, 205], [280, 250],
    [290, 320], [300, 360], [310, 382], [325, 381], [345, 388], [365, 382], [383, 373], [395, 390], [405, 430], [420, 510],
    [430, 580], [445, 650], [460, 685], [480, 705], [495, 711], [520, 708], [540, 718], [555, 740], [575, 754], [590, 748],
    [615, 760], [630, 735], [640, 718], [655, 670], [668, 652], [685, 668], [700, 676], [715, 680], [730, 705], [745, 760],
    [760, 795], [772, 808], [785, 800], [800, 760], [815, 680], [830, 620], [845, 590], [860, 585], [880, 587], [890, 610],
    [905, 670], [918, 733], [930, 745], [940, 735], [950, 690], [975, 570], [990, 480], [1005, 380], [1020, 280], [1035, 210],
    [1050, 170], [1070, 100], [1082, 97], [1095, 130], [1110, 190], [1125, 290], [1140, 370], [1155, 450], [1170, 510], [1195, 536],
    [1210, 515], [1225, 465], [1235, 455], [1250, 450], [1265, 430], [1285, 375], [1300, 318]
];

function candle(x, color, top, bottom, wickTop, wickBottom) {
    var cx = Math.round(x);
    var out = "";
    out += '<line x1="' + (cx + 0.5) + '" x2="' + (cx + 0.5) + '" y1="' + wickTop + '" y2="' + wickBottom + '" stroke="#777" />';
    out += '<rect x="' + (cx - 2) + '" y="' + top + '" width="5" height="' + Math.max(bottom - top, 2) + '" fill="' + COLORS[color] + '" stroke="#555" stroke-width=".6" />';
    return out;
}

// up/down signal arrow: tip and tail are y values, head is the wide end
function signal(x, tip, tail, color) {
    var dir = tail > tip ? 1 : -1;
    var neck = tip + dir * 10;
    var pts = [
        [x, tip], [x + 8, neck], [x + 2.5, neck], [x + 2.5, tail], [x - 2.5, tail], [x - 2.5, neck], [x - 8, neck]
    ];
    return '<polygon points="' + pts.join(" ") + '" fill="' + color + '" />';
}

function drawPriceChart() {
    var html = "";
    var y;
    for (y = 102; y < 723; y += 18.875) {
        html += '<line x1="8" x2="1843" y1="' + y + '" y2="' + y + '" stroke="#2e2e2e" stroke-dasharray="1 5" />';
        html += '<line x1="6" x2="9" y1="' + y + '" y2="' + y + '" stroke="#4a3418" />';
    }
    GRID_X.forEach(function (x) {
        html += '<line x1="' + x + '" x2="' + x + '" y1="94" y2="723" stroke="#2e2e2e" stroke-dasharray="1 5" />';
        html += '<line x1="' + x + '" x2="' + x + '" y1="716" y2="723" stroke="#5c3d18" />';
    });
    html += '<line x1="6" x2="6" y1="94" y2="723" stroke="#3a2812" />';
    html += '<line x1="275" x2="275" y1="94" y2="723" stroke="#7a5520" stroke-dasharray="3 3" />';

    SECTIONS.forEach(function (sec) {
        sec.rows.forEach(function (r) {
            var toY = function (v) { return sec.oy + v / 3; };
            var top = toY(r[2]);
            var bottom = toY(r[3]);
            var wickTop = r.length > 4 ? toY(r[4]) : top;
            var wickBottom = r.length > 5 ? toY(r[5]) : bottom;
            html += candle(sec.ox + r[0] / sec.sx, r[1], top, bottom, wickTop, wickBottom);
        });
    });

    html += signal(384.5, 187, 166, "#ff0000");
    html += signal(613, 357, 378, "#00f000");
    html += signal(955.5, 446, 467, "#00f000");
    html += signal(1056.7, 390, 369, "#ff0000");
    html += signal(1316.6, 536, 557, "#00f000");
    html += signal(1425, 612, 633, "#00f000");
    html += signal(1513.7, 672, 693, "#00f000");
    html += signal(1615, 600, 579, "#ff0000");

    html += '<polygon points="1807,699 1820,692 1833,699 1833,712 1807,712" fill="#000" stroke="#a86e1c" />';
    html += '<text x="1820" y="708" text-anchor="middle" font-size="11" font-family="Liberation Sans, sans-serif" fill="#eee">37</text>';
    document.getElementById("price-chart").innerHTML = html;
}

function drawLowerChart() {
    var html = "";
    [800.5, 848.5, 895.5, 942.5].forEach(function (y) {
        html += '<line x1="8" x2="1843" y1="' + y + '" y2="' + y + '" stroke="#2e2e2e" stroke-dasharray="1 5" />';
    });
    GRID_X.forEach(function (x) {
        html += '<line x1="' + x + '" x2="' + x + '" y1="750" y2="990" stroke="#2e2e2e" stroke-dasharray="1 5" />';
    });
    html += '<line x1="6" x2="6" y1="750" y2="990" stroke="#3a2812" />';
    html += '<line x1="6" x2="1838" y1="781.500" y2="781.500" stroke="#30e0e0" />';
    html += '<line x1="6" x2="1838" y1="943.500" y2="943.500" stroke="#30e0e0" />';

    var pts = STUDY_LINE.map(function (p) {
        return (880 + p[0] / 1.509).toFixed(1) + "," + (720 + p[1] / 3).toFixed(1);
    });
    html += '<polyline points="' + pts.join(" ") + '" fill="none" stroke="#e414e4" stroke-width="1.100" />';

    html += signal(956, 881, 902, "#00f000");
    html += signal(1057, 849, 828, "#ff0000");
    html += signal(1317, 926, 947, "#00f000");
    html += signal(1425, 964, 985, "#00f000");
    html += signal(1614, 953, 932, "#ff0000");
    document.getElementById("lower-chart").innerHTML = html;
}

// hand-drawn callouts: tail, shaft end, tip and the two head corners
function callout(tail, end, tip, c1, c2, color, width) {
    var out = "";
    out += '<line x1="' + tail[0] + '" y1="' + tail[1] + '" x2="' + end[0] + '" y2="' + end[1] + '" stroke="' + color + '" stroke-width="' + width + '" stroke-linecap="round" />';
    out += '<polygon points="' + [tip, c1, end, c2].join(" ") + '" fill="' + color + '" />';
    return out;
}

function drawAnnotations() {
    var orange = "#ffa500";
    var purple = "#7f107f";
    var html = "";
    html += callout([1146, 293], [1081, 358], [1070.6, 368.3], [1077, 350], [1089, 362], orange, 9);
    html += callout([724, 436], [646, 481], [634.8, 489.3], [641.6, 472.7], [653.7, 489.3], orange, 9);
    html += callout([799.5, 606.7], [680, 574], [667, 570], [683.8, 565], [679.8, 583.3], purple, 8);
    html += callout([778.2, 619], [680, 610], [667.8, 610], [684.6, 600], [681.8, 619], purple, 8);
    html += callout([1259, 796], [1107, 829], [1097.4, 833.3], [1108.6, 820], [1112, 838.3], purple, 8);
    html += callout([1300.8, 814], [1309, 900], [1309.4, 915], [1298.8, 898.3], [1319.4, 898.3], purple, 7);
    document.getElementById("annotations").innerHTML = html;
}

drawPriceChart();
drawLowerChart();
drawAnnotations();
```
